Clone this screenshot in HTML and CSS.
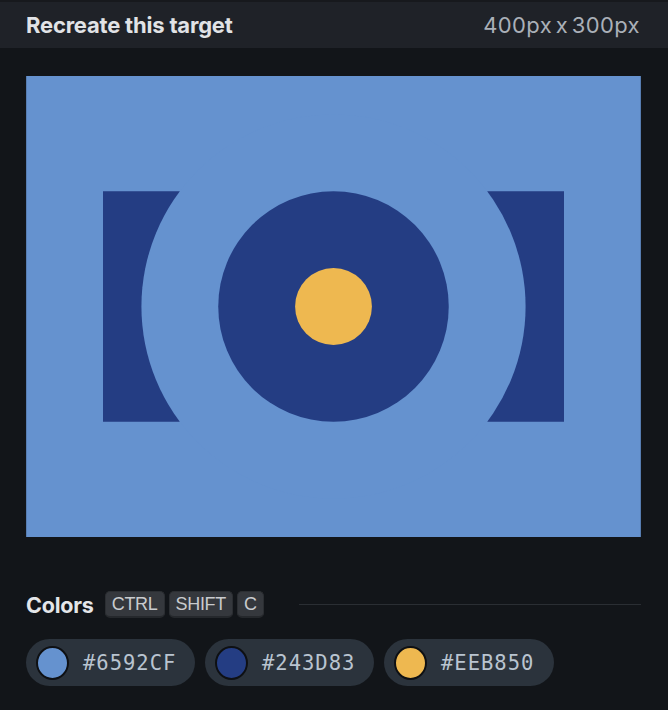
FILE: index.html
```
<!DOCTYPE html>
<html>
<head>
<meta charset="utf-8">
<link rel="stylesheet" href="styles.css">
</head>
<body>
<header class="topbar">
  <h1 class="title">Recreate this target</h1>
  <span class="dims">400px x 300px</span>
</header>
<main class="main">
  <div class="canvas">
    <svg class="art" viewBox="0 0 400 300" width="615" height="461">
      <rect width="400" height="300" fill="#6592CF"/>
      <rect x="50" y="75" width="50" height="150" fill="#243D83"/>
      <rect x="300" y="75" width="50" height="150" fill="#243D83"/>
      <circle cx="200" cy="150" r="125" fill="#6592CF"/>
      <circle cx="200" cy="150" r="75" fill="#243D83"/>
      <circle cx="200" cy="150" r="25" fill="#EEB850"/>
    </svg>
  </div>
  <div class="colors-head">
    <span class="colors-label">Colors</span>
    <span class="kbd">CTRL</span>
    <span class="kbd">SHIFT</span>
    <span class="kbd">C</span>
    <span class="rule"></span>
  </div>
  <div class="swatches">
    <div class="pill"><span class="dot dot-1"></span><span class="hex">#6592CF</span></div>
    <div class="pill"><span class="dot dot-2"></span><span class="hex">#243D83</span></div>
    <div class="pill"><span class="dot dot-3"></span><span class="hex">#EEB850</span></div>
  </div>
</main>
</body>
</html>
```
FILE: styles.css
```
* { box-sizing: border-box; }
html, body { margin: 0; padding: 0; }
body {
  background: #121519;
  width: 668px;
  height: 710px;
  overflow: hidden;
  font-family: Inter, "Noto Sans", sans-serif;
}
.topbar {
  height: 48px;
  background: #1f2228;
  border-top: 2px solid #17191d;
  display: flex;
  align-items: center;
  justify-content: space-between;
  padding: 0 28px 0 26px;
}
.title {
  margin: 0;
  font-size: 22px;
  font-weight: 700;
  color: #e1e3e6;
  letter-spacing: -0.2px;
}
.dims {
  font-size: 22px;
  color: #aab0b8;
  letter-spacing: 0.4px;
  word-spacing: -3px;
}
.main {
  padding: 28px 27px 0 26px;
}
.canvas {
  width: 615px;
  height: 461px;
}
.art { display: block; }
.colors-head {
  margin-top: 54px;
  height: 27px;
  display: flex;
  align-items: center;
}
.colors-label {
  font-size: 21.5px;
  font-weight: 700;
  color: #e4e6e9;
  letter-spacing: -0.2px;
  margin-right: 11px;
}
.kbd {
  height: 27px;
  padding: 0 6px;
  margin-right: 4px;
  display: flex;
  align-items: center;
  background: #35383d;
  border: 1px solid #2b2e32;
  border-bottom: 2px solid #25282c;
  border-radius: 5px;
  font-family: "Liberation Sans", Arial, sans-serif;
  font-size: 18px;
  letter-spacing: -0.3px;
  color: #c9cbce;
}
.rule {
  flex: 1;
  height: 1px;
  background: #2a2e33;
  margin-left: 31px;
}
.swatches {
  margin-top: 21px;
  display: flex;
  gap: 10px;
}
.pill {
  height: 47px;
  width: 169px;
  border-radius: 24px;
  background: #2b333c;
  display: flex;
  align-items: center;
  padding-left: 10px;
}
.pill:nth-child(3) { width: 170px; }
.dot {
  width: 33px;
  height: 34px;
  border-radius: 50%;
  border: 2px solid #0e1013;
  margin-right: 14px;
}
.dot-1 { background: #6592CF; }
.dot-2 { background: #243D83; }
.dot-3 { background: #EEB850; }
.hex {
  font-family: "DejaVu Sans Mono", monospace;
  font-size: 20.5px;
  letter-spacing: 1px;
  color: #b9c4d0;
}
```
